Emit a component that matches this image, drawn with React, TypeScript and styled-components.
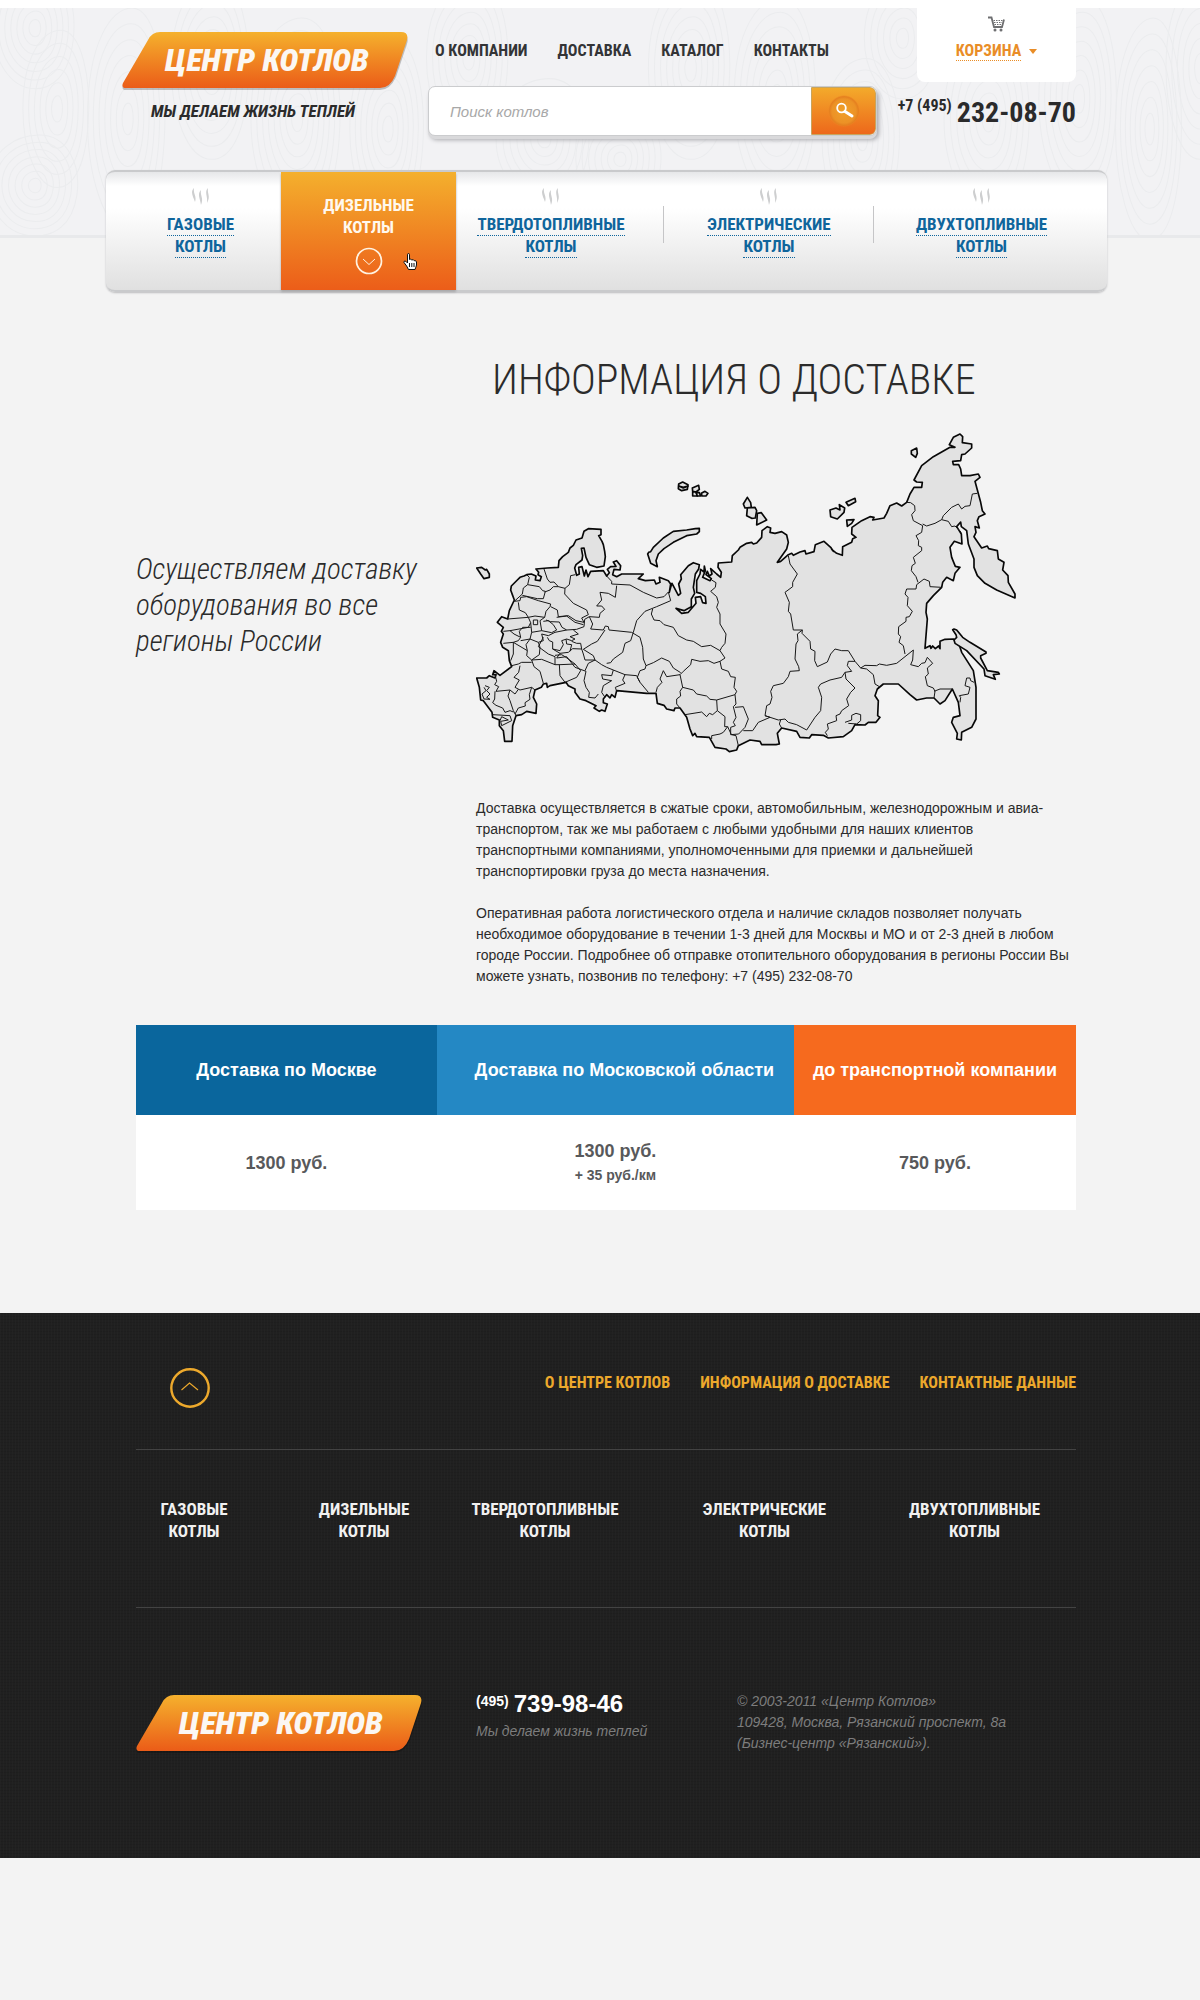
import React from "react";
import styled, { createGlobalStyle, css } from "styled-components";

const condensed = `"Roboto Condensed", "Liberation Sans Narrow", Roboto, sans-serif`;
const arial = `"Liberation Sans", Arial, sans-serif`;

const GlobalStyle = createGlobalStyle`
  * { box-sizing: border-box; }
  body { margin: 0; background: #f3f3f3; color: #2b2b2b; font-family: ${arial}; }
  a { color: inherit; text-decoration: none; }
  h1, p { margin: 0; }
`;

const Page = styled.div`
  border-top: 8px solid #fff;
`;

/* ---------- header ---------- */

const Header = styled.header`
  position: relative;
  height: 230px;
  background: #f2f2f4;
  border-bottom: 3px solid #e8e9eb;
`;

const Texture = styled.svg`
  position: absolute;
  inset: 0;
  width: 100%;
  height: 100%;
`;

const HeaderGrid = styled.div`
  position: relative;
  display: grid;
  grid-template-columns: 306px 1fr 199px;
  padding: 0 124px 0 122px;
`;

const Brand = styled.div`
  padding-top: 24px;
`;

const LogoLink = styled.a`
  display: grid;
  width: 286px;
  height: 58px;
`;

const LogoShape = styled.svg`
  grid-area: 1 / 1;
  width: 286px;
  height: 60px;
`;

const LogoText = styled.span`
  grid-area: 1 / 1;
  z-index: 1;
  padding-left: 4px;
  text-align: center;
  font: italic 900 32px/56px ${condensed};
  color: #fbf7f3;
`;

const Slogan = styled.p`
  padding: 10px 0 0 29px;
  font: italic 700 17px/22px ${condensed};
`;

const Middle = styled.div`
  display: flex;
  flex-direction: column;
  gap: 25px;
  padding-top: 32px;
`;

const TopNav = styled.nav`
  display: flex;
  gap: 30px;
  padding-left: 7px;
  font: 700 16px/21px ${condensed};
  color: #333436;
  white-space: nowrap;
`;

const Search = styled.form`
  display: flex;
  height: 50px;
  border: 1px solid #cbccce;
  border-radius: 7px;
  background: #fff;
  box-shadow: 0 3px 0 #d9d9db, 2px 4px 4px #a9a9ad;
  overflow: hidden;
`;

const SearchInput = styled.input`
  flex: 1;
  min-width: 0;
  padding: 0 21px;
  border: 0;
  outline: 0;
  background: transparent;
  font: italic 15px ${arial};
  &::placeholder { color: #a8a8a8; opacity: 1; }
`;

const SearchButton = styled.button`
  display: grid;
  place-items: center;
  width: 65px;
  padding: 0;
  border: 1px solid #c9a45c;
  border-radius: 0 6px 6px 0;
  background: linear-gradient(#f3aa2b, #ed681b);
`;

const Aside = styled.div`
  display: flex;
  flex-direction: column;
  align-items: flex-end;
  gap: 14px;
`;

const Basket = styled.a`
  display: flex;
  flex-direction: column;
  align-items: center;
  gap: 9px;
  width: 159px;
  height: 74px;
  padding-top: 8px;
  border-radius: 0 0 8px 8px;
  background: #fff;
  color: #e98d27;
  font: 700 16px/20px ${condensed};
`;

const BasketLabel = styled.span`
  display: flex;
  align-items: center;
  gap: 8px;
`;

const Dotted = styled.span`
  line-height: 19px;
  border-bottom: 1px dotted currentColor;
`;

const Caret = styled.span`
  border: 4px solid transparent;
  border-top: 5px solid currentColor;
  border-bottom: 0;
`;

const Phone = styled.a<{ $footer?: boolean }>`
  display: flex;
  align-items: flex-start;
  gap: 5px;
  white-space: nowrap;
  font: 700 ${(p) => (p.$footer ? "24px/26px" : "28px/34px")} ${(p) => (p.$footer ? arial : condensed)};
  color: ${(p) => (p.$footer ? "#fff" : "#2a2a2b")};
`;

const PhoneCode = styled.span<{ $small?: boolean }>`
  font-size: ${(p) => (p.$small ? "14px" : "16px")};
  line-height: 20px;
`;

/* ---------- catalogue bar ---------- */

const Catalogue = styled.nav`
  position: relative;
  display: grid;
  grid-template-columns: 175fr 175fr 208fr 210fr 233fr;
  height: 122px;
  margin: -68px 93px 0 106px;
  border: solid #c9cacc;
  border-width: 2px 0;
  border-radius: 9px;
  background: linear-gradient(#e6e7e9 0, #fff 14px, #fff 36px, #e0e0e0 100%);
  box-shadow: 0 1px 2px #bcbcbe;
`;

const CatalogueItem = styled.a<{ $active?: boolean; $divided?: boolean; $shift?: "left" | "right" }>`
  display: flex;
  flex-direction: column;
  align-items: center;
  gap: 9px;
  padding-top: 15px;
  padding-left: ${(p) => (p.$shift === "right" ? "14px" : "0")};
  padding-right: ${(p) => (p.$shift === "left" ? "18px" : "0")};
  font: 700 17px/22px ${condensed};
  color: #0f659c;
  ${(p) =>
    p.$divided &&
    css`
      background: linear-gradient(#c5c5c7, #c5c5c7) right 34px / 1px 37px no-repeat;
    `}
  ${(p) =>
    p.$active &&
    css`
      padding-top: 22px;
      color: #fff8ee;
      background: linear-gradient(#f4b02d, #ec5d19);
      box-shadow: 0 2px 2px #a9a9ab;
    `}
`;

const Lines = styled.span<{ $dotted?: boolean }>`
  display: flex;
  flex-direction: column;
  align-items: center;
  span {
    line-height: ${(p) => (p.$dotted ? "21px" : "22px")};
    border-bottom: ${(p) => (p.$dotted ? "1px dotted currentColor" : "0")};
  }
`;

const ActiveFoot = styled.span`
  display: flex;
  align-items: center;
  gap: 20px;
  padding-left: 35px;
`;

/* ---------- content ---------- */

const Content = styled.main`
  padding: 64px 124px 103px 136px;
`;

const Info = styled.div`
  display: grid;
  grid-template-columns: 340px 1fr;
`;

const Lead = styled.p`
  max-width: 310px;
  padding-top: 195px;
  font: italic 300 29px/36px ${condensed};
`;

const Title = styled.h1`
  padding: 0 0 0 16px;
  font: 300 42px/48px ${condensed};
  white-space: nowrap;
`;

const MapFrame = styled.svg`
  display: block;
  width: 100%;
  max-width: 542px;
  height: auto;
  margin: 29px 0 45px;
`;

const Text = styled.p`
  max-width: 600px;
  margin-bottom: 21px;
  font: 14px/21px ${arial};
`;

const Rates = styled.table`
  width: 100%;
  margin-top: 17px;
  border-collapse: collapse;
  table-layout: fixed;
  background: #fff;
`;

const RateHead = styled.th<{ $color: string; $width: string; $indent?: boolean }>`
  width: ${(p) => p.$width};
  height: 90px;
  padding: 0 0 0 ${(p) => (p.$indent ? "18px" : "0")};
  background: ${(p) => p.$color};
  color: #fff;
  font: 700 18px/22px ${arial};
  white-space: nowrap;
`;

const Rate = styled.td`
  height: 95px;
  padding: 0;
  text-align: center;
  color: #58595b;
  font: 700 18px/24px ${arial};
`;

const RateNote = styled.span`
  display: block;
  font-size: 14px;
`;

/* ---------- footer ---------- */

const Footer = styled.footer`
  padding: 0 124px 104px 136px;
  background:
    repeating-linear-gradient(90deg, rgba(255, 255, 255, 0.015) 0 1px, transparent 1px 3px),
    repeating-linear-gradient(rgba(0, 0, 0, 0.08) 0 1px, transparent 1px 3px),
    #202020;
  color: #f1f1f1;
`;

const FooterTop = styled.div`
  display: flex;
  justify-content: space-between;
  height: 137px;
  padding: 54px 0 0 33px;
  border-bottom: 1px solid #434343;
`;

const UpLink = styled.a`
  height: 42px;
`;

const FooterLinks = styled.nav`
  display: flex;
  gap: 30px;
  padding-top: 5px;
  font: 700 16px/22px ${condensed};
  color: #eda92c;
  white-space: nowrap;
`;

const FooterCatalogue = styled.nav`
  display: grid;
  grid-template-columns: minmax(0, 116fr) minmax(0, 224fr) minmax(0, 138fr) minmax(0, 301fr) minmax(0, 119fr);
  justify-items: center;
  height: 158px;
  padding: 48px 42px 0 0;
  border-bottom: 1px solid #434343;
  font: 700 17px/22px ${condensed};
`;

const FooterBottom = styled.div`
  display: grid;
  grid-template-columns: 340px 261px 1fr;
  padding-top: 87px;
`;

const Muted = styled.p`
  color: #7d7d7d;
  font: italic 14px/21px ${arial};
`;

const Address = styled(Muted)`
  margin-top: -4px;
`;

const FooterContact = styled.div`
  display: flex;
  flex-direction: column;
  gap: 4px;
  margin-top: -4px;
`;

/* ---------- drawings ---------- */

const Logo = ({ id }: { id: string }) => (
  <LogoLink href="#">
    <LogoShape viewBox="0 0 286 60" aria-hidden="true">
      <defs>
        <linearGradient id={id} x1="0" y1="0" x2="0" y2="1">
          <stop offset="0" stopColor="#f5b12d" />
          <stop offset="1" stopColor="#eb5c18" />
        </linearGradient>
      </defs>
      <path d="M38 2H278Q288 2 285 12L274 45Q268 58 258 58H4Q-1 58 1 53L26 10Q30 2 38 2Z" fill="#000" opacity=".22" />
      <path d="M38 0H279Q287 0 285 8L273 44Q268 56 258 56H4Q-1 56 1 51L26 8Q30 0 38 0Z" fill={`url(#${id})`} />
    </LogoShape>
    <LogoText>ЦЕНТР КОТЛОВ</LogoText>
  </LogoLink>
);

const Steam = () => (
  <svg width="20" height="18" viewBox="0 0 20 18" fill="#cdcecf" aria-hidden="true">
    <path d="M3 1C-1 5 2 9 4 15C6 9 2 7 3 1Z" />
    <path d="M10 3C6 7 9 11 10 18C13 11 9 9 10 3Z" />
    <path d="M17 1C13 5 17 9 16 16C20 9 16 7 17 1Z" />
  </svg>
);

const Cart = () => (
  <svg width="17" height="16" viewBox="0 0 17 16" fill="none" stroke="#6e6f71" aria-hidden="true">
    <path d="M0 1.500H3.500L6 11H14L16 3.500" strokeWidth="1.8" />
    <path d="M5.500 4.500H14.500M6 6.500H14M6.500 8.500H13.500" strokeDasharray="1.5 1" />
    <circle cx="7" cy="14" r="1.500" fill="#6e6f71" stroke="none" />
    <circle cx="13" cy="14" r="1.500" fill="#6e6f71" stroke="none" />
  </svg>
);

const Magnifier = () => (
  <svg width="34" height="34" viewBox="0 0 34 34" fill="none" aria-hidden="true">
    <defs>
      <radialGradient id="lens">
        <stop offset="0" stopColor="#f0a02a" />
        <stop offset=".75" stopColor="#ec9226" />
        <stop offset=".9" stopColor="#e5801f" />
        <stop offset="1" stopColor="#ee8823" stopOpacity="0" />
      </radialGradient>
    </defs>
    <circle cx="17" cy="17" r="16" fill="url(#lens)" />
    <circle cx="14.500" cy="14" r="4.300" stroke="#fff" strokeWidth="1.800" />
    <path d="M18 17.500L25 22" stroke="#fff" strokeWidth="3" strokeLinecap="round" />
  </svg>
);

const CircleDown = () => (
  <svg width="28" height="28" viewBox="0 0 28 28" fill="none" stroke="#fff3e2" aria-hidden="true">
    <circle cx="14" cy="14" r="12.500" strokeWidth="1.700" />
    <path d="M8 12L14 17.500L20 12" strokeWidth="1" />
  </svg>
);

const Hand = () => (
  <svg width="15" height="17" viewBox="0 0 15 17" fill="#fff" stroke="#111" strokeWidth="1" aria-hidden="true">
    <path d="M4.500 10V1.800Q4.500 .5 5.500 .5T6.500 1.800V6.500Q8 5.500 8.800 7Q10.500 6 11.200 7.700Q13 7 13.500 9V12Q13 14 12 16.500H5.500Q4 13 1 9.500Q.5 8 2 8Q3 8 4.500 10Z" />
    <path d="M6.500 10V14M8.800 10V14M11 10V14" />
  </svg>
);

const CircleUp = () => (
  <svg width="42" height="42" viewBox="0 0 42 42" fill="none" stroke="#eda92c" aria-hidden="true">
    <circle cx="21" cy="21" r="18.700" strokeWidth="2.400" />
    <path d="M12.500 23L20.500 16L29 23" strokeWidth="1.100" />
  </svg>
);

const rings = (cx: number, cy: number, rx: number, ry: number, n: number) =>
  Array.from({ length: n }, (_, i) => {
    const k = (i + 1) / n;
    const a = rx * k;
    const b = ry * k;
    return `M${cx - a} ${cy}C${cx - a} ${cy - b * 0.7} ${cx - a * 0.4} ${cy - b} ${cx + a * 0.1} ${cy - b}C${cx + a * 0.7} ${cy - b} ${cx + a} ${cy - b * 0.4} ${cx + a * 0.9} ${cy + b * 0.2}C${cx + a * 0.8} ${cy + b * 0.8} ${cx + a * 0.4} ${cy + b} ${cx} ${cy + b}C${cx - a * 0.6} ${cy + b} ${cx - a} ${cy + b * 0.5} ${cx - a} ${cy}Z`;
  }).join("");

const knots: [number, number, number, number, number][] = [
  [40, 20, 42, 60, 7], [62, 100, 34, 78, 6], [40, 176, 46, 50, 7], [132, 110, 40, 110, 7],
  [215, 60, 40, 90, 7], [300, 110, 46, 100, 8], [390, 120, 38, 90, 7], [470, 50, 42, 80, 7],
  [545, 130, 48, 60, 7], [620, 150, 44, 50, 7], [690, 60, 42, 90, 7], [775, 90, 42, 100, 7],
  [860, 130, 40, 80, 7], [900, 30, 38, 60, 6], [985, 110, 44, 90, 7], [1075, 90, 40, 100, 7],
  [1145, 120, 34, 110, 7], [1195, 60, 34, 90, 6],
];

const Wood = () => (
  <Texture viewBox="0 0 1200 225" preserveAspectRatio="xMidYMid slice" fill="none" stroke="#ebecee" aria-hidden="true">
    {knots.map((k, i) => (
      <path key={i} d={rings(...k)} />
    ))}
  </Texture>
);

/* Map points are split in a western and an eastern sheet; the eastern one is shifted by 840 units. */
const EAST = 840;
const shift = (points: string, dx: number) =>
  points
    .trim()
    .split(/\s+/)
    .map((p) => {
      const [x, y] = p.split(",").map(Number);
      return `${x + dx},${y}`;
    })
    .join(" ");

const coastNorthWest = `163,538 157,522 152,508 154,496 160,490 172,478 180,470 192,466 200,462 214,460 228,466 226,478 240,480 244,468 234,462 236,455 228,445 262,442 295,440 297,420 308,408 325,395 330,382 340,374 348,358 366,352 372,332 385,324 423,326 423,342 416,345 426,362 430,372 434,392 436,408 432,436 410,440 388,432 378,410 372,382 364,383 368,405 366,418 348,432 344,442 350,464 358,460 356,440 366,438 373,466 378,448 384,468 392,452 430,450 440,466 448,456 442,446 452,438 468,437 460,424 470,420 482,435 480,448 462,446 458,462 470,468 485,460 550,460 535,474 556,480 583,478 588,490 600,485 598,470 625,480 632,490 628,515 632,500 636,488 655,524 662,518 656,490 664,475 662,462 685,435 700,426 718,432 716,445 706,460 700,500 704,518 694,535 694,558 672,570 648,563 665,578 685,575 708,548 706,530 722,528 728,546 738,548 736,528 722,518 710,515 710,480 720,460 722,446 732,454 733,436 736,450 728,470 750,480 754,474 738,462 742,452 748,466 756,460 752,444 770,460 782,470 784,455 774,440 775,427 815,424 817,405 835,388`;
const coastEast = `0,380 20,368 35,365 40,370 50,367 65,350 66,330 82,318 92,322 90,335 105,338 125,333 140,343 145,365 140,385 112,425 122,422 145,402 155,398 160,404 180,394 195,390 198,400 222,393 226,372 252,362 272,380 280,392 275,386 290,398 307,404 308,378 335,365 338,354 348,350 335,340 336,320 365,300 390,288 402,290 398,298 432,292 440,278 450,255 470,247 485,256 500,245 510,220 522,200 545,200 547,185 530,184 522,178 545,135 580,108 630,80 645,80 628,72 640,50 660,40 668,48 667,66 695,70 695,82 675,100 665,102 662,120 638,122 640,132 656,132 662,145 665,165 690,165 715,160 720,170 705,182 722,245 727,270 735,280 717,288 712,300 718,322 705,318 708,335 702,348 725,382 742,376 746,384 772,390 775,415 792,425 788,448 804,465 805,485 825,520 825,532 770,508 735,488 712,465 702,440 702,415 685,370 680,330 664,318 662,304 650,318 664,340 666,370 643,362 630,380 635,410 646,437 660,440 645,458 640,480 620,470 608,485 605,500 580,525 560,548 558,575 562,595 555,683 570,675 573,683 578,676 586,684 596,676 600,684 600,662 615,656 640,655 655,665 665,695 700,750 708,800 708,895 695,920 665,935 664,958 650,955 652,938 635,905 640,890 660,885 655,845 637,805 615,840 600,850 582,832 560,832 530,838 510,822 475,790 430,790 412,805 405,825 415,840 413,885 420,890 408,905 385,905 375,913 345,912 335,930 310,948 265,952 250,944 215,942 208,952 180,950 170,932 125,922 112,938 118,970 108,972 65,972 60,962 30,958`;
const coastSouthWest = `835,975 830,988 808,993 798,985 765,980 748,950 710,948 705,938 698,945 690,925 680,890 660,862 645,862 642,870 620,865 612,854 592,848 588,818 560,818 470,810 465,830 455,822 450,832 440,822 430,835 430,846 442,850 435,872 425,868 418,872 402,862 408,855 378,840 360,835 345,815 345,805 325,795 318,785 270,795 262,800 260,788 250,790 244,800 225,808 220,830 230,850 228,878 200,872 185,882 168,885 158,915 156,962 134,962 130,930 118,915 118,898 98,890 96,875 70,840 62,838 58,800 50,772 80,772 88,765 105,772 108,762 98,762 102,750 120,764 155,738 148,720 145,690 128,680 122,665 130,640 124,632 130,620 112,605 125,588 143,595 148,570 163,538`;

const coast = `M${coastNorthWest} ${shift(coastEast, EAST)} ${coastSouthWest}Z`;

const islands = [
  "50,442 65,440 76,448 80,446 88,460 88,470 72,474 62,460",
  "563,400 566,395 572,393 580,380 610,352 640,332 680,328 706,324 718,323 718,333 710,340 680,345 640,365 612,384 595,400 588,420 592,438 572,428",
  "656,190 668,184 684,192 682,206 665,210 655,204",
  "656,196 670,202 684,196 670,200",
  "697,202 716,194 718,206 708,214 698,212",
  "698,214 708,214 712,226 698,226",
  "708,214 718,216 722,226 712,226",
  "724,218 735,212 744,218 738,226 726,226",
  ...[
    "638,627 642,625 650,628 668,650 690,665 738,694 738,698 722,705 722,712 742,750 775,755 778,760 760,762 766,776 735,765 732,745 680,690 645,668 642,658 650,650 648,642",
    "514,90 530,82 532,98 527,110 514,100",
    "270,268 288,262 300,268 298,252 314,262 312,275 292,295 272,288",
    "318,245 345,233 347,243 325,255",
    "320,298 342,297 335,308 322,317",
    "22,230 32,246 34,260 15,262 10,250",
    "22,262 45,260 50,270 46,292 35,293 20,285",
    "52,278 64,276 80,298 50,313",
  ].map((p) => shift(p, EAST)),
];

const borders = [
  "252,445 262,475 270,485 282,484 295,498 315,503 328,492 332,465 346,462",
  "200,462 208,470 203,492 190,502 187,520 163,542",
  "203,492 238,498 248,510 256,512 250,534 232,534 187,524",
  "254,514 270,508 280,498 295,498",
  "163,542 180,540 182,530 200,528 235,540 272,550 270,558 258,572 254,590 225,586 205,590 196,576 178,568 175,545",
  "315,503 314,520 340,548 380,568 385,582 365,592 372,605 348,600 325,585 295,588 292,568 272,558",
  "440,466 455,482 455,490 510,493 550,515 590,532 612,528 625,514 632,540 590,558 555,572 530,600 520,635 512,660 495,668 488,695 460,715 452,726 440,728",
  "470,495 466,530 445,518 420,515 425,538 410,556 425,556 434,566 420,578 418,590 388,588",
  "388,588 398,610 392,625 430,628 436,616 445,618 447,628 515,635 540,650 548,680 550,715 558,735 555,745 540,750 532,770 540,785 565,815",
  "388,588 374,596 372,618 350,626 320,628 285,635 265,645 245,640",
  "143,595 180,592 205,590 212,606 205,620 150,630 130,632",
  "150,630 162,640 182,650 175,660 160,665 130,668",
  "182,650 178,632 188,620 212,620",
  "254,590 240,600 245,630 215,635 212,606",
  "220,598 233,598 233,612 220,612 220,598",
  "250,602 265,600 280,612 290,628 275,636 245,630",
  "258,598 272,603 298,604 306,620 320,628",
  "290,590 320,586 345,605 370,612",
  "215,635 210,655 235,665 250,660 245,640",
  "182,660 210,655 198,672 202,690 160,665 160,700 152,720",
  "202,690 200,705 215,718 238,702 240,680 235,665",
  "262,650 268,660 278,664 278,685 300,690 310,672 305,660 320,655 335,660 345,655 330,648 355,640 340,628",
  "250,650 235,678 265,700 285,708 285,732 245,716 215,718",
  "285,704 305,702 318,710 345,730 300,732 285,732",
  "278,685 300,698 325,695 338,684 365,685 370,700 375,718 405,718 400,705 370,686 395,670 412,662 435,628",
  "318,655 320,670 335,672 330,692",
  "335,662 350,668 362,668 365,685",
  "298,732 300,765 315,785 350,770 362,750 345,730",
  "215,718 222,738 240,752 250,788",
  "300,698 290,712 320,708 345,740 378,752 372,780 378,800 388,815 386,830 405,832 415,820",
  "375,750 385,728 405,718 425,732 440,740 460,748 455,765 425,762 428,775 455,780 430,795 425,815 435,830",
  "460,748 495,762 488,778 495,788 466,800 470,812",
  "495,762 530,765 540,785",
  "155,735 175,730 185,725 215,725",
  "180,735 176,755 162,770 178,778 165,800 180,808 215,800 225,808",
  "105,762 110,782 104,792 116,798 108,812 150,808 165,820 175,806",
  "150,808 144,826 150,840 160,870 168,885",
  "215,800 208,822 210,836 195,846 196,856 175,862 165,880",
  "105,812 104,835 98,846 108,854 128,862 135,875 150,870 160,874",
  "98,882 150,885 155,900 125,915 122,902 145,898 125,888 120,900",
  "75,795 88,800 80,810 90,820 80,830 90,836 72,835 66,820 78,810 72,800",
  "578,565 574,580 582,598 600,600 612,612 640,620 655,645 680,658 700,662 725,678 752,674 780,690",
  "558,735 580,726 605,712 628,722 640,742 662,756",
  "755,478 768,486 766,500 752,512 770,528 775,545 770,560 780,580 780,610 798,640 795,668 785,680 780,690 795,712 780,722 762,728 745,720 720,722 695,716 692,732 670,752 660,762 620,768 610,750 600,775 606,785 592,800 588,815",
  "660,762 668,800 660,812 662,826 650,835 650,850 660,862",
  "668,800 700,808 710,820 740,826 750,836 770,838 825,822 830,812 822,800 826,770 812,768 805,752 785,745 780,722",
  "770,838 772,870 758,882 748,878 740,888 725,874 675,882",
  "772,870 795,888 794,918 803,918 790,935 780,940 755,945 755,955",
  "825,822 828,850 820,858 828,890 820,905 826,915 812,920 812,942 836,940",
  "825,860 850,858 865,895 855,920 836,940",
  "803,918 814,942 828,945 835,975",
  ...[
    "145,405 150,430 172,460 158,485 158,498 135,515 148,545 145,572 152,580 160,628 187,628 186,638 210,662 212,685 225,692 224,720 232,738 262,724 272,700 285,685 305,690 325,690 345,722 362,742 380,745 400,762 405,790 418,798",
    "187,628 172,640 174,660 168,670 165,715 176,738 178,750 150,752 145,768 130,788 100,795 92,812 96,830 90,850 80,855 75,885 90,890 55,905 38,930 10,930",
    "75,885 115,898 135,895 145,905 170,912 200,928 225,890 242,870 245,830 235,800 242,790 270,778 305,770 315,755 335,752 322,735 325,722 345,722",
    "315,755 318,775 345,802 332,815 320,835 326,855 305,870 300,880 288,885 290,900 262,910 265,925 256,935 262,945",
    "122,898 118,910 125,922",
    "315,905 335,898 335,884 348,878 362,882 362,900 350,910 325,908",
    "362,742 375,734 410,735 418,730 440,734 470,728 495,708 520,688 518,718 512,732 535,738 545,728 555,726 562,710 578,728 562,742 565,760 556,768 562,795 580,802 585,812 582,832",
    "495,700 490,675 477,665 482,648 475,640 476,618 498,602 498,590 508,588 517,572 502,555 504,530 495,520 500,505 528,505 530,492 552,475 568,482 570,498 605,500",
    "534,485 528,468 514,450 516,435 526,428 520,410 545,390 545,380 535,375 536,360 528,345 545,335 548,315 520,300 515,282 525,270 524,255 512,246 500,245",
    "548,310 560,316 585,308 605,297 610,285 635,260 655,250 665,265 675,257 690,255 697,220 712,218",
    "605,297 625,302 635,318 645,316 664,335",
    "582,812 600,805 637,805",
    "660,845 662,830 658,825 685,820 690,800 675,795 680,772 690,772 692,780 702,785",
  ].map((p) => shift(p, EAST)),
];

const RussiaMap = () => (
  <MapFrame viewBox="48 37 1626 960" role="img" aria-label="Карта России" fill="none" stroke="#080808" strokeLinejoin="round">
    <path d={coast} fill="#e2e2e2" strokeWidth="5" />
    {islands.map((p) => (
      <polygon key={p} points={p} fill="#e2e2e2" strokeWidth="5" />
    ))}
    {borders.map((p) => (
      <polyline key={p} points={p} stroke="#181818" strokeWidth="3" />
    ))}
  </MapFrame>
);

/* ---------- page ---------- */

const boilers = ["ГАЗОВЫЕ", "ДИЗЕЛЬНЫЕ", "ТВЕРДОТОПЛИВНЫЕ", "ЭЛЕКТРИЧЕСКИЕ", "ДВУХТОПЛИВНЫЕ"];

export default function App() {
  return (
    <Page>
      <GlobalStyle />
      <Header>
        <Wood />
        <HeaderGrid>
          <Brand>
            <Logo id="logo-top" />
            <Slogan>МЫ ДЕЛАЕМ ЖИЗНЬ ТЕПЛЕЙ</Slogan>
          </Brand>
          <Middle>
            <TopNav>
              {["О КОМПАНИИ", "ДОСТАВКА", "КАТАЛОГ", "КОНТАКТЫ"].map((t) => (
                <a href="#" key={t}>{t}</a>
              ))}
            </TopNav>
            <Search onSubmit={(e) => e.preventDefault()}>
              <SearchInput type="search" placeholder="Поиск котлов" aria-label="Поиск котлов" />
              <SearchButton type="submit" aria-label="Найти">
                <Magnifier />
              </SearchButton>
            </Search>
          </Middle>
          <Aside>
            <Basket href="#">
              <Cart />
              <BasketLabel>
                <Dotted>КОРЗИНА</Dotted>
                <Caret />
              </BasketLabel>
            </Basket>
            <Phone href="tel:+74952320870">
              <PhoneCode>+7 (495)</PhoneCode>232-08-70
            </Phone>
          </Aside>
        </HeaderGrid>
      </Header>

      <Catalogue>
        {boilers.map((name, i) => {
          const active = i === 1;
          return (
            <CatalogueItem
              href="#"
              key={name}
              $active={active}
              $divided={i === 2 || i === 3}
              $shift={i === 0 ? "right" : i === 2 || i === 4 ? "left" : undefined}
            >
              {!active && <Steam />}
              <Lines $dotted={!active}>
                <span>{name}</span>
                <span>КОТЛЫ</span>
              </Lines>
              {active && (
                <ActiveFoot>
                  <CircleDown />
                  <Hand />
                </ActiveFoot>
              )}
            </CatalogueItem>
          );
        })}
      </Catalogue>

      <Content>
        <Info>
          <Lead>Осуществляем доставку оборудования во все регионы России</Lead>
          <div>
            <Title>ИНФОРМАЦИЯ О ДОСТАВКЕ</Title>
            <RussiaMap />
            <Text>
              Доставка осуществляется в сжатые сроки, автомобильным, железнодорожным и авиа-
              <br />
              транспортом, так же мы работаем с любыми удобными для наших клиентов
              <br />
              транспортными компаниями, уполномоченными для приемки и дальнейшей
              <br />
              транспортировки груза до места назначения.
            </Text>
            <Text>
              Оперативная работа логистического отдела и наличие складов позволяет получать
              <br />
              необходимое оборудование в течении 1-3 дней для Москвы и МО и от 2-3 дней в любом
              <br />
              городе России. Подробнее об отправке отопительного оборудования в регионы России Вы
              <br />
              можете узнать, позвонив по телефону: +7 (495) 232-08-70
            </Text>
          </div>
        </Info>
        <Rates>
          <thead>
            <tr>
              <RateHead $color="#0a669d" $width="32%">Доставка по Москве</RateHead>
              <RateHead $color="#2488c4" $width="38%" $indent>Доставка по Московской области</RateHead>
              <RateHead $color="#f66a1e" $width="30%">до транспортной компании</RateHead>
            </tr>
          </thead>
          <tbody>
            <tr>
              <Rate>1300 руб.</Rate>
              <Rate>1300 руб.<RateNote>+ 35 руб./км</RateNote></Rate>
              <Rate>750 руб.</Rate>
            </tr>
          </tbody>
        </Rates>
      </Content>

      <Footer>
        <FooterTop>
          <UpLink href="#" aria-label="Наверх">
            <CircleUp />
          </UpLink>
          <FooterLinks>
            {["О ЦЕНТРЕ КОТЛОВ", "ИНФОРМАЦИЯ О ДОСТАВКЕ", "КОНТАКТНЫЕ ДАННЫЕ"].map((t) => (
              <a href="#" key={t}>{t}</a>
            ))}
          </FooterLinks>
        </FooterTop>
        <FooterCatalogue>
          {boilers.map((name) => (
            <a href="#" key={name}>
              <Lines>
                <span>{name}</span>
                <span>КОТЛЫ</span>
              </Lines>
            </a>
          ))}
        </FooterCatalogue>
        <FooterBottom>
          <Logo id="logo-bottom" />
          <FooterContact>
            <Phone href="tel:+74957399846" $footer>
              <PhoneCode $small>(495)</PhoneCode>739-98-46
            </Phone>
            <Muted>Мы делаем жизнь теплей</Muted>
          </FooterContact>
          <Address>
            © 2003-2011 «Центр Котлов»
            <br />
            109428, Москва, Рязанский проспект, 8а
            <br />
            (Бизнес-центр «Рязанский»).
          </Address>
        </FooterBottom>
      </Footer>
    </Page>
  );
}
